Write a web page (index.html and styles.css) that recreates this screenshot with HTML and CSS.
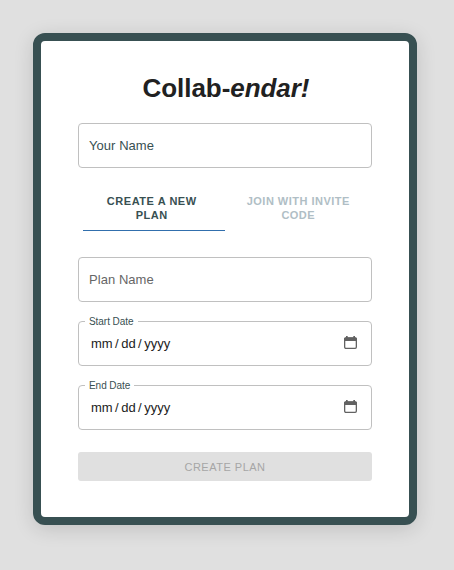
FILE: index.html
```html
<!DOCTYPE html>
<html lang="en">
<head>
<meta charset="utf-8">
<title>Collab-endar!</title>
<link rel="stylesheet" href="styles.css">
</head>
<body>
<main class="card">
  <h1 class="title">Collab-<em>endar!</em></h1>
  <div class="field field-name"><span class="placeholder dark">Your Name</span></div>
  <div class="tabs">
    <div class="tab active">CREATE A NEW<br>PLAN</div>
    <div class="tab">JOIN WITH INVITE<br>CODE</div>
  </div>
  <div class="field"><span class="placeholder">Plan Name</span></div>
  <div class="field">
    <span class="label">Start Date</span>
    <div class="date"><span>mm</span><span class="slash">/</span><span>dd</span><span class="slash">/</span><span>yyyy</span></div>
    <svg class="calendar" viewBox="0 0 13 13"><path class="top" d="M0 5V2.7Q0 1.2 1.5 1.2H2V0h1.7v1.2h5.6V0H11v1.2h.5Q13 1.2 13 2.7V5z"/><rect class="frame" x=".65" y="2.2" width="11.7" height="10.1" rx="1.2"/></svg>
  </div>
  <div class="field">
    <span class="label">End Date</span>
    <div class="date"><span>mm</span><span class="slash">/</span><span>dd</span><span class="slash">/</span><span>yyyy</span></div>
    <svg class="calendar" viewBox="0 0 13 13"><path class="top" d="M0 5V2.7Q0 1.2 1.5 1.2H2V0h1.7v1.2h5.6V0H11v1.2h.5Q13 1.2 13 2.7V5z"/><rect class="frame" x=".65" y="2.2" width="11.7" height="10.1" rx="1.2"/></svg>
  </div>
  <button class="submit" disabled>CREATE PLAN</button>
</main>
</body>
</html>
```
FILE: styles.css
```css
* { box-sizing: border-box; }
body {
  margin: 0;
  padding: 33px;
  height: 570px;
  background: #e0e0e0;
  font-family: "Liberation Sans", Arial, sans-serif;
  overflow: hidden;
}
.card {
  width: 384px;
  height: 492px;
  padding: 29px 37px 0;
  border: 8px solid #385052;
  border-radius: 12px;
  background: #fff;
  box-shadow: 0 4px 20px rgba(0, 0, 0, 0.14);
}
.title {
  margin: 0 0 17px;
  padding-left: 2px;
  height: 36px;
  line-height: 36px;
  font-size: 26px;
  letter-spacing: -0.05px;
  text-align: center;
  color: #212121;
}
.field {
  position: relative;
  display: flex;
  align-items: center;
  height: 45px;
  margin-bottom: 19px;
  padding: 0 10px;
  border: 1px solid #c0c0c0;
  border-radius: 4px;
}
.field-name { margin-bottom: 15px; }
.placeholder {
  font-size: 13px;
  letter-spacing: 0.05px;
  color: #666;
}
.placeholder.dark { color: #385052; }
.label {
  position: absolute;
  left: 6px;
  top: -7px;
  padding: 0 4px;
  background: #fff;
  font-size: 10px;
  line-height: 13px;
  letter-spacing: -0.05px;
  color: #385052;
}
.date {
  display: flex;
  padding-left: 2px;
  font-size: 13px;
  line-height: 15px;
  color: #212121;
}
.slash {
  width: 8.5px;
  text-align: center;
}
.calendar {
  width: 13px;
  height: 13px;
  margin: -2px 4px 0 auto;
}
.calendar .top { fill: #626262; }
.calendar .frame {
  fill: none;
  stroke: #626262;
  stroke-width: 1.3;
}
.tabs {
  display: flex;
  height: 48px;
  margin: 0 5px 26px;
}
.tab {
  flex: 1;
  padding: 11px 0 0 5px;
  font-size: 11px;
  font-weight: bold;
  line-height: 14px;
  letter-spacing: 0.48px;
  text-align: center;
  color: #b0bec5;
}
.tab.active {
  padding: 11px 4px 0 0;
  letter-spacing: 0.55px;
  color: #385052;
  border-bottom: 1px solid #316fad;
}
.submit {
  display: block;
  width: 100%;
  height: 29px;
  margin-top: 22px;
  padding: 0;
  border: 0;
  border-radius: 3px;
  background: #e0e0e0;
  color: #a6a6a6;
  font: 11px "Liberation Sans", Arial, sans-serif;
  letter-spacing: 0.5px;
}
```
